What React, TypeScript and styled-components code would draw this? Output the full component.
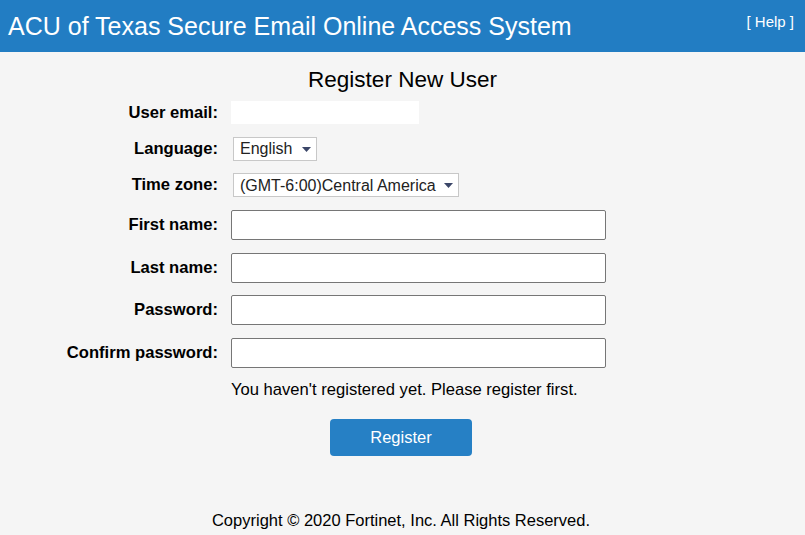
import styled, { createGlobalStyle } from "styled-components";

const GlobalStyle = createGlobalStyle`
  body {
    margin: 0;
    background: #f5f5f5;
    font-family: "Liberation Sans", Arial, sans-serif;
    color: #000;
  }
`;

const Header = styled.header`
  display: flex;
  justify-content: space-between;
  align-items: flex-start;
  height: 52px;
  padding: 0 11px 0 8px;
  background: #227dc3;
  color: #fff;
`;

const Title = styled.h1`
  margin: 0;
  padding-top: 12px;
  font-size: 25px;
  font-weight: normal;
`;

const HelpLink = styled.a`
  padding-top: 13px;
  font-size: 15px;
  color: #fff;
  text-decoration: none;
`;

const Main = styled.main`
  display: flex;
  flex-direction: column;
`;

const Heading = styled.h2`
  margin: 15px 0 8px;
  text-align: center;
  font-size: 22.5px;
  font-weight: normal;
`;

const FormGrid = styled.form`
  display: grid;
  grid-template-columns: 218px 375px;
  column-gap: 13px;
  row-gap: 12.7px;
  align-items: center;
`;

const Label = styled.label`
  text-align: right;
  font-weight: bold;
  font-size: 16.6px;
`;

const EmailBox = styled.div`
  width: 188px;
  height: 23px;
  background: #fff;
`;

const SelectWrap = styled.div<{ $width: number }>`
  position: relative;
  width: ${(p) => p.$width}px;
  margin-left: 2px;
`;

const Select = styled.select`
  appearance: none;
  width: 100%;
  height: 24px;
  padding: 0 0 0 6px;
  border: 1px solid #c8c8c8;
  border-radius: 0;
  background: #fff;
  font-family: "Liberation Sans", Arial, sans-serif;
  font-size: 16px;
  color: #222;
`;

const Caret = styled.svg`
  position: absolute;
  right: 6px;
  top: 10px;
  pointer-events: none;
`;

const TextInput = styled.input`
  box-sizing: border-box;
  width: 375px;
  height: 30px;
  margin: 0;
  border: 1px solid #767676;
  border-radius: 2px;
  background: #fff;
  font-size: 16px;
`;

const Message = styled.p`
  grid-column: 2;
  margin: -1px 0 0;
  font-size: 16.6px;
  white-space: nowrap;
`;

const ButtonRow = styled.div`
  display: flex;
  justify-content: center;
  margin-top: 19px;
`;

const Button = styled.button`
  width: 142px;
  height: 37px;
  margin-right: 3px;
  border: none;
  border-radius: 4px;
  background: #2680c5;
  color: #fff;
  font-family: "Liberation Sans", Arial, sans-serif;
  font-size: 16.5px;
`;

const Footer = styled.footer`
  margin-top: 55px;
  text-align: center;
  font-size: 16.5px;
  padding-right: 3px;
`;

const Chooser = ({ width, value }: { width: number; value: string }) => (
  <SelectWrap $width={width}>
    <Select defaultValue={value}>
      <option>{value}</option>
    </Select>
    <Caret width="9" height="5" viewBox="0 0 9 5">
      <path d="M0 0h9L4.5 5z" fill="#3b4668" />
    </Caret>
  </SelectWrap>
);

const App = () => {
  return (
    <>
      <GlobalStyle />
      <Header>
        <Title>ACU of Texas Secure Email Online Access System</Title>
        <HelpLink href="#">[ Help ]</HelpLink>
      </Header>
      <Main>
        <Heading>Register New User</Heading>
        <FormGrid onSubmit={(e) => e.preventDefault()}>
          <Label>User email:</Label>
          <EmailBox />

          <Label>Language:</Label>
          <Chooser width={84} value="English" />

          <Label>Time zone:</Label>
          <Chooser width={226} value="(GMT-6:00)Central America" />

          <Label>First name:</Label>
          <TextInput type="text" />

          <Label>Last name:</Label>
          <TextInput type="text" />

          <Label>Password:</Label>
          <TextInput type="password" />

          <Label>Confirm password:</Label>
          <TextInput type="password" />

          <Message>You haven't registered yet. Please register first.</Message>
        </FormGrid>
        <ButtonRow>
          <Button type="button">Register</Button>
        </ButtonRow>
        <Footer>Copyright © 2020 Fortinet, Inc. All Rights Reserved.</Footer>
      </Main>
    </>
  );
};

export default App;
